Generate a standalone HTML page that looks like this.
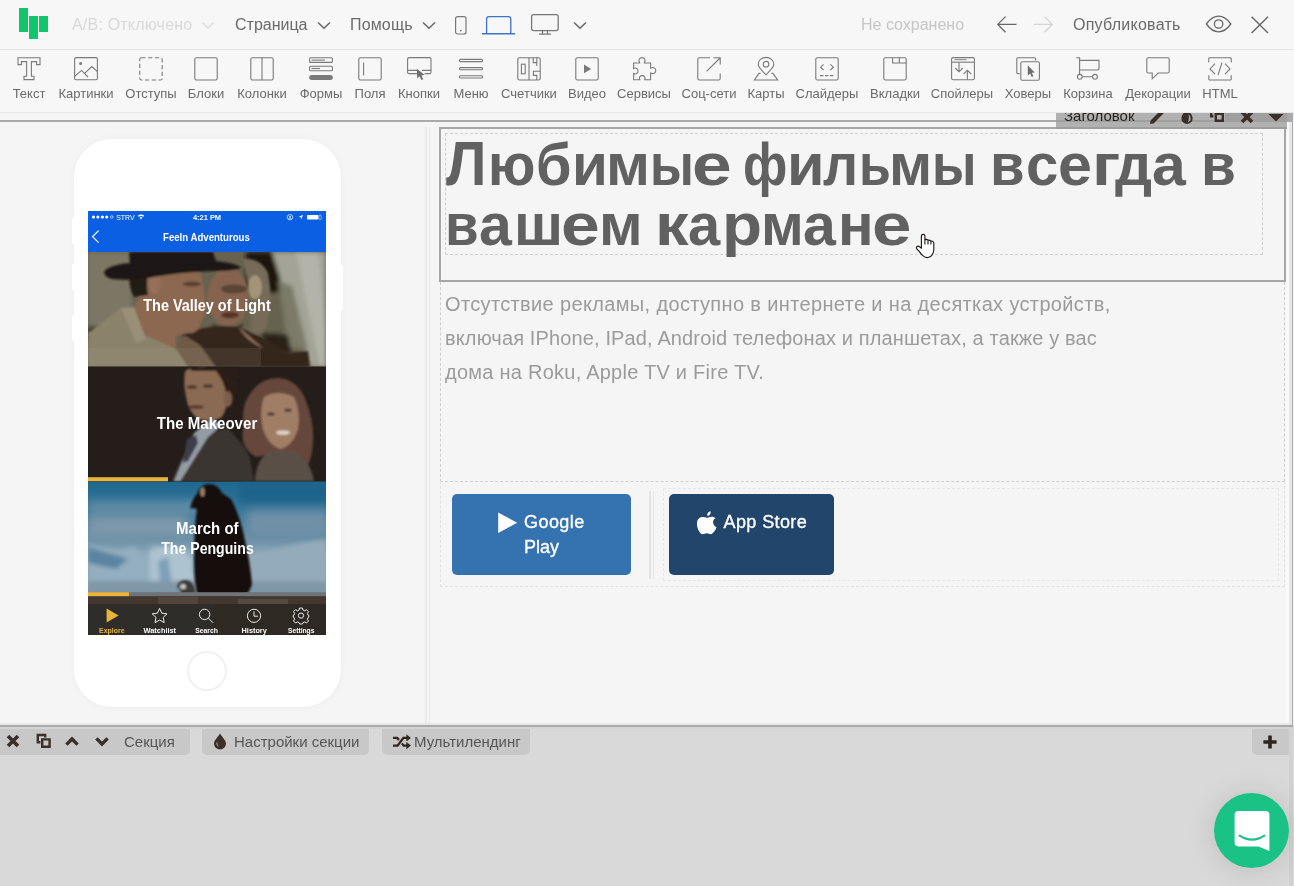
<!DOCTYPE html>
<html><head><meta charset="utf-8">
<style>
*{box-sizing:border-box;margin:0;padding:0}
html,body{width:1294px;height:886px;overflow:hidden;background:#d9d9d9;font-family:"Liberation Sans",sans-serif;}
.abs{position:absolute}
#top{z-index:5;position:absolute;left:0;top:0;width:1294px;height:113px;background:#f7f7f7}
#top .l1{position:absolute;left:0;top:49px;width:1294px;height:1px;background:#e6e6e6}
#top .l2{position:absolute;left:0;top:112px;width:1294px;height:1px;background:#e8e8e8}
.mi{position:absolute;top:15px;font-size:16px;line-height:19px;color:#6a6a6a;white-space:nowrap}
.tool{position:absolute;top:56px;width:80px;margin-left:-40px;text-align:center;font-size:13px;color:#6a6a6a;white-space:nowrap}
.tool svg{display:block;margin:0 auto;width:26px;height:26px}
.tool span{display:block;margin-top:4px;line-height:16px}
#gap{position:absolute;left:0;top:113px;width:1294px;height:7px;background:#f5f5f5}
#sec{position:absolute;left:0;top:120px;width:1293px;height:607px;background:#f5f5f5;border-top:2px solid #aaa;border-bottom:2px solid #aaa;border-right:1px solid #aaa}

.dash{border:1px dashed #cfcfcf}
.hw{position:absolute;font-weight:700;font-size:63px;line-height:60px;color:#616161;white-space:nowrap}
.hw span{display:inline-block;transform-origin:0 0}
.pl{position:absolute;left:445px;font-size:20px;line-height:34px;color:#9b9b9b;white-space:nowrap}

.bt{position:absolute;font-size:18px;line-height:25px;color:#fff;white-space:nowrap;-webkit-text-stroke:0.35px #fff}

.tab{position:absolute;top:729px;height:26px;background:#c8c8c8;border-radius:0 0 5px 5px}
.tl{position:absolute;top:733px;font-size:15px;line-height:18px;color:#555;white-space:nowrap}
</style></head><body><div id="wrap" style="position:absolute;left:0;top:0;width:1294px;height:886px;will-change:transform">
<div id="top">
  <div class="l1"></div><div class="l2"></div>
  <div class="abs" style="left:19px;top:8px;width:9px;height:24px;background:#11c56d"></div>
  <div class="abs" style="left:29px;top:16px;width:9px;height:23px;background:#11c56d"></div>
  <div class="abs" style="left:39px;top:16px;width:9px;height:16px;background:#11c56d"></div>
  <div class="mi" style="left:72px;color:#d9d9d9;letter-spacing:0.2px">A/B: Отключено</div>
  <svg class="abs" style="left:200px;top:19px" width="16" height="12" viewBox="0 0 16 12"><path d="M2.5 3.5 L8 9 L13.5 3.5" fill="none" stroke="#dcdcdc" stroke-width="1.3"/></svg>
  <div class="mi" style="left:235px">Страница</div>
  <svg class="abs" style="left:316px;top:19px" width="16" height="12" viewBox="0 0 16 12"><path d="M2 3.5 L8 9.3 L14 3.5" fill="none" stroke="#666" stroke-width="1.4"/></svg>
  <div class="mi" style="left:350px;letter-spacing:0.15px">Помощь</div>
  <svg class="abs" style="left:421px;top:19px" width="16" height="12" viewBox="0 0 16 12"><path d="M2 3.5 L8 9.3 L14 3.5" fill="none" stroke="#666" stroke-width="1.4"/></svg>
  <svg class="abs" style="left:452px;top:13px" width="18" height="24" viewBox="0 0 18 24"><rect x="3.6" y="3.6" width="10.4" height="17.4" rx="2" fill="none" stroke="#777" stroke-width="1.2"/><circle cx="8.8" cy="17.6" r="0.9" fill="#777"/></svg>
  <svg class="abs" style="left:480px;top:13px" width="38" height="24" viewBox="0 0 38 24"><path d="M6.6 20.6 V6 Q6.6 3.6 9 3.6 H28.4 Q30.8 3.6 30.8 6 V20.6" fill="none" stroke="#3d74c8" stroke-width="1.3"/><path d="M2 20.8 H35" stroke="#3d74c8" stroke-width="1.4"/></svg>
  <svg class="abs" style="left:528px;top:11px" width="34" height="26" viewBox="0 0 34 26"><rect x="3.6" y="3.6" width="26.6" height="16" rx="2" fill="none" stroke="#777" stroke-width="1.3"/><path d="M14.5 19.6 V23 M19.5 19.6 V23 M11 23.2 H23" stroke="#777" stroke-width="1.2" fill="none"/></svg>
  <svg class="abs" style="left:572px;top:19px" width="16" height="12" viewBox="0 0 16 12"><path d="M2 3.5 L8 9.3 L14 3.5" fill="none" stroke="#666" stroke-width="1.4"/></svg>
  <div class="mi" style="left:861px;color:#c6c6c6">Не сохранено</div>
  <svg class="abs" style="left:995px;top:14px" width="24" height="20" viewBox="0 0 24 20"><path d="M21.5 10.4 H3 M10.5 2.6 L2.8 10.4 L10.5 18.2" fill="none" stroke="#666" stroke-width="1.3"/></svg>
  <svg class="abs" style="left:1031px;top:14px" width="24" height="20" viewBox="0 0 24 20"><path d="M2.5 10.4 H21 M13.5 2.6 L21.2 10.4 L13.5 18.2" fill="none" stroke="#d4d4d4" stroke-width="1.3"/></svg>
  <div class="mi" style="left:1073px;letter-spacing:0.25px">Опубликовать</div>
  <svg class="abs" style="left:1204px;top:12px" width="30" height="24" viewBox="0 0 30 24"><path d="M2.4 12 Q8 4.2 14.6 4.2 Q21.2 4.2 26.8 12 Q21.2 19.8 14.6 19.8 Q8 19.8 2.4 12 Z" fill="none" stroke="#666" stroke-width="1.3"/><circle cx="14.6" cy="12" r="4.2" fill="none" stroke="#666" stroke-width="1.3"/></svg>
  <svg class="abs" style="left:1248px;top:13px" width="24" height="24" viewBox="0 0 24 24"><path d="M3.6 3.8 L20 20 M20 3.8 L3.6 20" fill="none" stroke="#666" stroke-width="1.4"/></svg>
  <div class="tool" style="left:29px"><svg viewBox="0 0 26 26"><path d="M2 1.8 H24 V8.6 H20.6 V5.6 H15.4 V20.2 H18 V23.6 H8 V20.2 H10.6 V5.6 H5.4 V8.6 H2 Z" fill="none" stroke="#7a7a7a" stroke-width="1.1"/></svg><span>Текст</span></div>
  <div class="tool" style="left:86px"><svg viewBox="0 0 26 26"><rect x="1.6" y="1.6" width="22.8" height="22.2" rx="1.5" fill="none" stroke="#7a7a7a" stroke-width="1.1"/><circle cx="7.6" cy="7.6" r="1.5" fill="#7a7a7a"/><path d="M1.6 20.4 L8.6 14.4 L15 21 M11.6 17.4 L18.8 10.6 L24.4 15.6" fill="none" stroke="#7a7a7a" stroke-width="1.1"/></svg><span>Картинки</span></div>
  <div class="tool" style="left:151px"><svg viewBox="0 0 26 26"><rect x="1.8" y="1.8" width="22.4" height="22.2" rx="1.5" fill="none" stroke="#7a7a7a" stroke-width="1.1" stroke-dasharray="4.2 2.6"/></svg><span>Отступы</span></div>
  <div class="tool" style="left:206px"><svg viewBox="0 0 26 26"><rect x="1.8" y="1.8" width="22.4" height="22.2" rx="1.5" fill="none" stroke="#7a7a7a" stroke-width="1.1"/></svg><span>Блоки</span></div>
  <div class="tool" style="left:262px"><svg viewBox="0 0 26 26"><rect x="1.8" y="1.8" width="22.4" height="22.2" rx="1.5" fill="none" stroke="#7a7a7a" stroke-width="1.1"/><path d="M13 1.8 V24" fill="none" stroke="#7a7a7a" stroke-width="1.1"/></svg><span>Колонки</span></div>
  <div class="tool" style="left:321px"><svg viewBox="0 0 26 26"><rect x="1.6" y="1.8" width="22.8" height="4.6" rx="1" fill="none" stroke="#7a7a7a" stroke-width="1.1"/><path d="M3.6 4.1 H17" fill="none" stroke="#7a7a7a" stroke-width="1.1"/><rect x="1.6" y="10.2" width="22.8" height="4.6" rx="1" fill="none" stroke="#7a7a7a" stroke-width="1.1"/><path d="M3.6 12.5 H12" fill="none" stroke="#7a7a7a" stroke-width="1.1"/><rect x="1.2" y="19" width="23.6" height="5" rx="2.5" fill="#7a7a7a"/></svg><span>Формы</span></div>
  <div class="tool" style="left:370px"><svg viewBox="0 0 26 26"><rect x="1.8" y="1.8" width="22.4" height="22.2" rx="1.5" fill="none" stroke="#7a7a7a" stroke-width="1.1"/><path d="M6.6 6.4 V19.4" fill="none" stroke="#7a7a7a" stroke-width="1.1"/></svg><span>Поля</span></div>
  <div class="tool" style="left:419px"><svg viewBox="0 0 26 26"><path d="M11.4 17.6 H3 Q1.6 17.6 1.6 16.2 V3 Q1.6 1.6 3 1.6 H23.6 Q25 1.6 25 3 V16.2 Q25 17.6 23.6 17.6 H18.6 M1.6 14.400 H11 M16 14.400 H25" fill="none" stroke="#7a7a7a" stroke-width="1.1"/><path d="M10.9 12.8 L11.2 22.4 L13.6 20.2 L15.4 24 L17.2 23.2 L15.400 19.400 L18.600 19 Z" fill="#6e6e6e"/></svg><span>Кнопки</span></div>
  <div class="tool" style="left:471px"><svg viewBox="0 0 26 26"><rect x="1.4" y="3.4" width="23.2" height="2.2" rx="1.1" fill="none" stroke="#7a7a7a" stroke-width="1.1"/><rect x="1.4" y="11.6" width="23.2" height="2.2" rx="1.1" fill="none" stroke="#7a7a7a" stroke-width="1.1"/><rect x="1.4" y="19.8" width="23.2" height="2.2" rx="1.1" fill="none" stroke="#7a7a7a" stroke-width="1.1"/></svg><span>Меню</span></div>
  <div class="tool" style="left:529px"><svg viewBox="0 0 26 26"><rect x="1.8" y="1.8" width="22.4" height="22.2" rx="1.5" fill="none" stroke="#7a7a7a" stroke-width="1.1"/><path d="M13 1.8 V24" fill="none" stroke="#7a7a7a" stroke-width="1.1"/><rect x="5.4" y="8.2" width="3.8" height="9.6" fill="none" stroke="#7a7a7a" stroke-width="1.1"/><path d="M17.2 1.8 V6.6 H20.8 V1.8 M20.8 6.6 V10 M24.2 15.2 H17.4 V19.4 H20.8 V24" fill="none" stroke="#7a7a7a" stroke-width="1.1"/></svg><span>Счетчики</span></div>
  <div class="tool" style="left:587px"><svg viewBox="0 0 26 26"><rect x="1.8" y="1.8" width="22.4" height="22.2" rx="1.5" fill="none" stroke="#7a7a7a" stroke-width="1.1"/><path d="M10 8.6 L17.2 12.9 L10 17.2 Z" fill="#7a7a7a"/></svg><span>Видео</span></div>
  <div class="tool" style="left:644px"><svg viewBox="0 0 26 26"><path d="M2.6 7 H8.6 C7 3.6 8.8 1.6 11 1.6 C13.2 1.6 15 3.6 13.4 7 H19.6 V12.2 C22.6 10.6 24.8 12.2 24.8 14.6 C24.8 17 22.6 18.6 19.6 17 V23.8 H13.6 C14.8 21.4 13.4 19.6 11.2 19.6 C9 19.6 7.6 21.4 8.8 23.8 H2.6 V17.4 C5 18.8 7 17.2 7 15 C7 12.8 5 11.2 2.6 12.6 Z" fill="none" stroke="#7a7a7a" stroke-width="1.1"/></svg><span>Сервисы</span></div>
  <div class="tool" style="left:709px"><svg viewBox="0 0 26 26"><path d="M14 1.8 H3.2 Q1.8 1.8 1.8 3.2 V22.6 Q1.8 24 3.2 24 H22.8 Q24.2 24 24.2 22.6 V17.6" fill="none" stroke="#7a7a7a" stroke-width="1.1"/><path d="M10.6 15.4 L24 2 M17.4 1.8 H24.2 V8.6" fill="none" stroke="#7a7a7a" stroke-width="1.1"/></svg><span>Соц-сети</span></div>
  <div class="tool" style="left:766px"><svg viewBox="0 0 26 26"><path d="M13 19 C8.6 13.8 5.2 11.6 5.2 8.2 C5.2 4.2 8.8 1.4 13 1.4 C17.2 1.4 20.8 4.2 20.8 8.2 C20.8 11.6 17.4 13.8 13 19 Z" fill="none" stroke="#7a7a7a" stroke-width="1.1"/><circle cx="13" cy="8.2" r="2.8" fill="none" stroke="#7a7a7a" stroke-width="1.1"/><path d="M7.6 17.4 H6 L1.4 24 H24.6 L20 17.4 H18.4" fill="none" stroke="#7a7a7a" stroke-width="1.1"/></svg><span>Карты</span></div>
  <div class="tool" style="left:827px"><svg viewBox="0 0 26 26"><rect x="1.8" y="1.8" width="22.4" height="22.2" rx="1.5" fill="none" stroke="#7a7a7a" stroke-width="1.1"/><path d="M9.6 8.4 L6.6 11.2 L9.6 14 M16.4 8.4 L19.4 11.2 L16.4 14" fill="none" stroke="#7a7a7a" stroke-width="1.1"/><path d="M6 19.6 H20" fill="none" stroke="#7a7a7a" stroke-width="1.1" stroke-dasharray="3.4 1.6"/></svg><span>Слайдеры</span></div>
  <div class="tool" style="left:895px"><svg viewBox="0 0 26 26"><rect x="1.8" y="1.8" width="22.4" height="22.2" rx="1.5" fill="none" stroke="#7a7a7a" stroke-width="1.1"/><path d="M10.6 1.8 V7 H24.2 M17.3 1.8 V7" fill="none" stroke="#7a7a7a" stroke-width="1.1"/></svg><span>Вкладки</span></div>
  <div class="tool" style="left:962px"><svg viewBox="0 0 26 26"><rect x="2.6" y="1.6" width="22.8" height="22.2" rx="1.5" fill="none" stroke="#7a7a7a" stroke-width="1.1"/><path d="M5.4 3.6 H17.5" fill="none" stroke="#9a9a9a" stroke-width="1.3"/><path d="M2.6 6.2 H25.4" fill="none" stroke="#7a7a7a" stroke-width="1.1"/><path d="M10 6.6 V15.6 M6.3 12 L10 15.8 L13.8 12 M18.4 23.6 V14.4 M14.7 18 L18.4 14.2 L22.1 18" fill="none" stroke="#7a7a7a" stroke-width="1.1"/></svg><span>Спойлеры</span></div>
  <div class="tool" style="left:1028px"><svg viewBox="0 0 26 26"><path d="M4.6 17.6 H3 Q1.8 17.6 1.8 16.4 V3 Q1.8 1.8 3 1.8 H19.4 Q20.6 1.8 20.6 3 V4.6" fill="none" stroke="#7a7a7a" stroke-width="1.1"/><rect x="5.8" y="5.8" width="18.6" height="18.4" rx="1.5" fill="none" stroke="#7a7a7a" stroke-width="1.1"/><path d="M12.8 9.4 L12.8 19.4 L15.2 17.4 L16.8 21 L18.4 20.2 L16.8 16.8 L19.8 16.4 Z" fill="#6e6e6e"/></svg><span>Ховеры</span></div>
  <div class="tool" style="left:1088px"><svg viewBox="0 0 26 26"><path d="M1.2 1.8 H4.6 V18.4 M4.6 4.4 H24 V12.6 Q24 14 22.600 14 H4.6 M7.2 20.8 H17.6" fill="none" stroke="#7a7a7a" stroke-width="1.1"/><circle cx="4.8" cy="20.8" r="2.4" fill="none" stroke="#7a7a7a" stroke-width="1.1"/><circle cx="20" cy="20.8" r="2.4" fill="none" stroke="#7a7a7a" stroke-width="1.1"/></svg><span>Корзина</span></div>
  <div class="tool" style="left:1158px"><svg viewBox="0 0 26 26"><path d="M3.2 1.8 H22.8 Q24.2 1.8 24.2 3.2 V15.6 Q24.2 17 22.8 17 H13.2 L7.2 22.8 V17 H3.2 Q1.8 17 1.8 15.6 V3.2 Q1.8 1.8 3.2 1.8 Z" fill="none" stroke="#7a7a7a" stroke-width="1.1"/></svg><span>Декорации</span></div>
  <div class="tool" style="left:1220px"><svg viewBox="0 0 26 26"><path d="M1.8 6.6 V2.4 Q1.8 1.8 2.4 1.8 H23.6 Q24.2 1.8 24.2 2.4 V6.6 M1.8 19.2 V23.4 Q1.8 24 2.4 24 H23.6 Q24.2 24 24.2 23.4 V19.2" fill="none" stroke="#7a7a7a" stroke-width="1.1"/><path d="M8 7.6 L3 12.9 L8 18.2 M18 7.6 L23 12.9 L18 18.2 M15 6.6 L11 19.2" fill="none" stroke="#7a7a7a" stroke-width="1.1"/></svg><span>HTML</span></div>
</div>
<div id="gap"></div><div class="abs" style="left:1293px;top:113px;width:1px;height:612px;background:#f5f5f5"></div>
<div id="sec">
  <div id="inner" style="position:absolute;left:0;top:-122px;width:1294px;height:886px">
<!-- column separators -->
<div class="abs" style="left:425px;top:127px;width:2px;height:596px;background:#e9e9e9"></div>
<div class="abs" style="left:429px;top:127px;width:1px;height:596px;background:#ebebeb"></div>
<div class="abs" style="left:74px;top:139px;width:267px;height:568px;border-radius:38px;background:#fff;box-shadow:0 0 10px rgba(0,0,0,0.035)"></div>
<div class="abs" style="left:72px;top:218px;width:3px;height:26px;background:#fff;border-radius:1px"></div>
<div class="abs" style="left:72px;top:264px;width:3px;height:26px;background:#fff;border-radius:1px"></div>
<div class="abs" style="left:72px;top:315px;width:3px;height:26px;background:#fff;border-radius:1px"></div>
<div class="abs" style="left:340px;top:265px;width:3px;height:45px;background:#fff;border-radius:1px"></div>
<div class="abs" style="left:187px;top:651px;width:40px;height:40px;border-radius:50%;border:2px solid #f1f1f1"></div>
<svg class="abs" style="left:88px;top:211px" width="238" height="424" viewBox="0 0 238 424" font-family="Liberation Sans, sans-serif">
<defs>
<filter id="b2" x="-20%" y="-20%" width="140%" height="140%"><feGaussianBlur stdDeviation="2"/></filter>
<filter id="b4" x="-20%" y="-20%" width="140%" height="140%"><feGaussianBlur stdDeviation="4"/></filter>
<filter id="b1" x="-20%" y="-20%" width="140%" height="140%"><feGaussianBlur stdDeviation="1"/></filter>
<clipPath id="c1"><rect x="0" y="41" width="238" height="114.500"/></clipPath>
<clipPath id="c2"><rect x="0" y="155.500" width="238" height="115"/></clipPath>
<clipPath id="c3"><rect x="0" y="270.500" width="238" height="115"/></clipPath>
<linearGradient id="sky" x1="0" y1="0" x2="0" y2="1"><stop offset="0" stop-color="#1d678e"/><stop offset="0.25" stop-color="#3a7899"/><stop offset="0.5" stop-color="#6a8fa6"/><stop offset="0.62" stop-color="#8aa6b8"/><stop offset="0.9" stop-color="#8ea4b4"/><stop offset="1" stop-color="#6f8797"/></linearGradient>
</defs>
<rect width="238" height="424" fill="#2d2822"/>
<g clip-path="url(#c1)">
<rect x="0" y="41" width="238" height="115" fill="#66624f"/>
<g filter="url(#b2)">
<rect x="0" y="41" width="44" height="74" fill="#7b7765"/>
<rect x="0" y="116" width="30" height="16" fill="#3a3028"/>
<rect x="158" y="41" width="34" height="40" fill="#1c1410"/>
<path d="M184 41 H238 V156 H222 L196 80 Z" fill="#a3a397"/>
<path d="M208 41 L230 41 L238 120 L238 156 L232 156 Z" fill="#b3b3a9"/>
<path d="M190 70 L204 75 L220 140 L200 135 Z" fill="#7c7a68"/>
<path d="M173 122 L200 124 L204 144 L180 140 Z" fill="#2a2018"/>
</g>
<g filter="url(#b1)">
<path d="M154 48 Q172 46 180 62 Q186 90 178 118 Q170 128 162 120 Q166 90 154 48 Z" fill="#766a58"/>
<ellipse cx="167" cy="76" rx="7" ry="12" fill="#a39478"/>
<ellipse cx="140" cy="86" rx="20.500" ry="29" fill="#85634f"/>
<ellipse cx="146" cy="78" rx="13" ry="4.500" fill="#5a4436"/>
<ellipse cx="142" cy="104" rx="9" ry="3.200" fill="#553428"/>
<path d="M124 112 Q140 122 156 112 L152 120 L128 120 Z" fill="#4a3428"/>
<path d="M94 124 Q120 112 150 116 Q180 128 200 142 L220 140 L222 156 L100 156 Z" fill="#34261f"/>
<path d="M150 116 Q158 130 176 138 L160 124 Z" fill="#8a6a55"/>
<path d="M56 64 Q60 58 72 58 L113 62 Q116 76 117 90 L121 97 L116 100 L117 106 L113 110 Q112 120 104 122 Q92 122 88 126 L88 138 L46 128 L44 98 Q52 90 56 64 Z" fill="#8b674f"/>
<path d="M42 62 L60 60 Q58 74 60 84 L46 86 Q40 76 42 62 Z" fill="#241a15"/>
<ellipse cx="67" cy="73" rx="6" ry="10" fill="#96705a"/>
<ellipse cx="104" cy="73" rx="9" ry="2.600" fill="#5a4032"/>
<path d="M0 156 L0 122 L33 97 L44 100 L52 122 L88 138 L128 156 Z" fill="#8b826a"/>
<path d="M33 97 L46 96 L58 128 L48 132 Z" fill="#9a9078"/>
<path d="M88 138 L96 124 L112 134 L128 156 L100 156 Z" fill="#6e5a46"/>
<path d="M16 61 Q20 54 42 52 L41 41 H125 L128 50 Q146 52 153 56 Q150 60 128 60 Q90 61 60 67 Q40 70 24 68 Q16 66 16 61 Z" fill="#1f1713"/>
</g>
<rect x="0" y="137" width="173" height="19" fill="#a9a696" opacity="0.120"/>
</g>
<g clip-path="url(#c2)">
<rect x="0" y="155.500" width="238" height="115" fill="#241d19"/>
<g filter="url(#b1)">
<path d="M190 167 Q210 168 218 190 Q228 215 224 240 Q222 256 214 258 L196 240 L168 246 Q150 235 156 215 Q152 195 164 180 Q174 167 190 167 Z" fill="#66473a"/>
<path d="M167 270 Q168 248 182 240 L206 240 Q222 248 226 270 Z" fill="#5a5046"/>
<path d="M176 186 Q190 178 206 186 Q213 200 210 218 Q204 236 192 238 Q180 234 175 218 Q171 200 176 186 Z" fill="#a07e66"/>
<ellipse cx="195" cy="221.600" rx="7" ry="2.200" fill="#e2d2c8"/>
<ellipse cx="183" cy="203" rx="4" ry="1.600" fill="#4a3226"/><ellipse cx="200" cy="199" rx="4" ry="1.600" fill="#4a3226"/>
<path d="M83 270.500 L103 228 L118 222 L140 217 L156 236 L162 247 L166 270.500 Z" fill="#3a3531"/>
<path d="M106 222 L124 208 L134 214 L120 226 L92 270.500 L86 270.500 Z" fill="#949ba4"/>
<path d="M99 228 L108 224 L110 232 L100 250 L95 252 Z" fill="#3c3e48"/>
<path d="M97 160 Q110 152 130 158 L140 180 Q140 196 134 206 Q124 212 110 208 Q100 200 98 186 Q95 172 97 160 Z" fill="#8a6a52"/>
<path d="M100 156 L150 156 Q152 176 146 192 L140 196 Q142 186 138 182 Q136 170 128 160 L104 160 Z" fill="#2c1f18"/>
<ellipse cx="140" cy="188" rx="4" ry="8" fill="#7d5d48"/>
<ellipse cx="108" cy="196" rx="8" ry="2" fill="#5a3c30"/>
<ellipse cx="104" cy="176" rx="5" ry="1.800" fill="#4a3428"/><ellipse cx="120" cy="175" rx="5" ry="1.800" fill="#4a3428"/>
</g>
<rect x="0" y="266.200" width="80" height="4.400" fill="#e8b43c"/>
</g>
<g clip-path="url(#c3)">
<rect x="0" y="270.500" width="238" height="115" fill="url(#sky)"/>
<g filter="url(#b4)">
<rect x="150" y="270" width="100" height="22" fill="#1a648b"/>
<rect x="0" y="290" width="110" height="14" fill="#5f8ba6"/>
<rect x="0" y="306" width="100" height="20" fill="#7d98aa"/>
<rect x="160" y="300" width="80" height="24" fill="#6f91a8"/>
</g>
<g filter="url(#b2)">
<path d="M0 334 L30 340 L46 336 L58 346 L64 334 L100 338 L108 372 L0 374 Z" fill="#93aec0"/>
<path d="M0 336 L40 348 L28 358 L0 352 Z" fill="#5a84a2"/>
<path d="M160 344 L190 338 L214 332 L238 328 L238 374 L160 374 Z" fill="#94abbb"/>
<path d="M62 340 L80 334 L104 346 L106 378 L62 378 Z" fill="#aec3d0"/>
<path d="M70 350 L80 346 L84 372 L72 372 Z" fill="#7ea0ba"/>
<rect x="0" y="370" width="238" height="12" fill="#8097a7"/>
</g>
<g filter="url(#b1)">
<path d="M109 283 Q112 273 121 273 Q130 273 134 282 L143 288 Q152 305 156 325 Q162 350 164 373 Q162 382 155 386 L110 386 Q106 372 106 350 Q106 318 109 298 Q104 296 102 298 Q104 288 109 283 Z" fill="#15110d"/>
<ellipse cx="114.500" cy="281" rx="2.200" ry="4.500" fill="#b8927a" opacity="0.850"/>
<path d="M89 376 Q90 369 98 369 Q106 370 107 380 L107 386 L94 386 Q94 380 89 376 Z" fill="#3a3a38"/>
<ellipse cx="95" cy="375.500" rx="3" ry="2.600" fill="#c4c4be"/>
</g>
<rect x="0" y="381.200" width="238" height="4.300" fill="#6f7478"/>
<rect x="0" y="381.200" width="41" height="4.300" fill="#e8b43c"/>
</g>
<rect x="0" y="385.500" width="238" height="8" fill="#43372f"/>
<rect x="70" y="386" width="40" height="7" fill="#5a4c44" opacity="0.700"/>
<rect x="150" y="388" width="50" height="5" fill="#5e544c" opacity="0.700"/>
<rect x="0" y="393.500" width="238" height="30.500" fill="#2e2923"/>
<rect x="0" y="393.500" width="125" height="30.500" fill="#2e2d29"/>
<rect x="0" y="0" width="238" height="41" fill="#0a5fe3"/>
<g fill="#fff">
<circle cx="5.500" cy="6" r="1.600"/><circle cx="9.900" cy="6" r="1.600"/><circle cx="14.400" cy="6" r="1.600"/><circle cx="18.700" cy="6" r="1.600"/><circle cx="23.800" cy="6" r="1.300" fill="none" stroke="#fff" stroke-width="0.600"/>
<text x="28.200" y="8.600" font-size="7.200" textLength="18.500" lengthAdjust="spacingAndGlyphs">STRV</text>
<path d="M49.800 4.800 Q53 2.400 56.200 4.800 L55.200 5.800 Q53 4.200 50.800 5.800 Z M51.600 6.600 Q53 5.600 54.400 6.600 L53 8.400 Z"/>
<text x="119" y="8.600" font-size="7.400" font-weight="700" text-anchor="middle" textLength="28.200" lengthAdjust="spacingAndGlyphs">4:21 PM</text>
<circle cx="202" cy="6.200" r="2.700" fill="none" stroke="#fff" stroke-width="0.700"/><circle cx="202" cy="5.800" r="0.900"/><path d="M200.400 7.800 Q202 6.600 203.600 7.800" fill="none" stroke="#fff" stroke-width="0.600"/>
<path d="M215 3.800 L210.600 6 L212.800 6.300 L213.200 8.400 Z"/>
<rect x="219" y="4" width="11.400" height="4.600" rx="0.800"/><rect x="231" y="4" width="2.200" height="4.600" rx="1" fill="none" stroke="#fff" stroke-width="0.500"/>
<path d="M10.600 19.600 L4.600 25.600 L10.600 31.600" fill="none" stroke="#fff" stroke-width="1.300"/>
<text x="118.400" y="29.500" font-size="11" font-weight="700" text-anchor="middle" textLength="86.800" lengthAdjust="spacingAndGlyphs">Feeln Adventurous</text>
<text x="119" y="100" font-size="16.500" font-weight="700" text-anchor="middle" textLength="127.500" lengthAdjust="spacingAndGlyphs">The Valley of Light</text>
<text x="119" y="218.400" font-size="16.500" font-weight="700" text-anchor="middle" textLength="100.500" lengthAdjust="spacingAndGlyphs">The Makeover</text>
<text x="119.300" y="322.700" font-size="16.500" font-weight="700" text-anchor="middle" textLength="62.500" lengthAdjust="spacingAndGlyphs">March of</text>
<text x="119.500" y="342.800" font-size="16.500" font-weight="700" text-anchor="middle" textLength="92.500" lengthAdjust="spacingAndGlyphs">The Penguins</text>
</g>
<path d="M18.600 397.600 L30.600 404.600 L18.600 411.600 Z" fill="#e8b43c"/>
<text x="23.800" y="421.600" font-size="7.800" font-weight="700" text-anchor="middle" fill="#e8b43c" textLength="25.500" lengthAdjust="spacingAndGlyphs">Explore</text>
<g fill="none" stroke="#fff" stroke-width="0.900">
<path d="M71.600 397.400 L73.800 402.200 L79 402.800 L75.200 406.400 L76.200 411.600 L71.600 409 L67 411.600 L68 406.400 L64.200 402.800 L69.400 402.200 Z"/>
<circle cx="116.600" cy="403.400" r="5.200"/><path d="M120.400 407.200 L125 411.800"/>
<circle cx="166" cy="404.800" r="6.600"/><path d="M166 400.400 V405.200 H170"/>
<circle cx="213" cy="404.600" r="2.600"/>
<path d="M211.600 397 H214.400 L214.900 399 L216.700 399.800 L218.500 398.700 L220.500 400.700 L219.400 402.500 L220.200 404.300 L220.800 404.400 V406.200 L220.200 406.400 L219.400 408.200 L220.500 410 L218.500 412 L216.700 410.900 L214.900 411.700 L214.400 413 H211.600 L211.100 411.700 L209.300 410.900 L207.500 412 L205.500 410 L206.600 408.200 L205.800 406.400 L205.200 406.200 V404.400 L205.800 404.300 L206.600 402.500 L205.500 400.700 L207.500 398.700 L209.300 399.800 L211.100 399 Z"/>
</g>
<g fill="#fff" font-size="7.800" font-weight="700" text-anchor="middle">
<text x="71.800" y="421.600" textLength="32.500" lengthAdjust="spacingAndGlyphs">Watchlist</text>
<text x="118.600" y="421.600" textLength="22.700" lengthAdjust="spacingAndGlyphs">Search</text>
<text x="166.200" y="421.600" textLength="25.200" lengthAdjust="spacingAndGlyphs">History</text>
<text x="213.200" y="421.600" textLength="26.600" lengthAdjust="spacingAndGlyphs">Settings</text>
</g>
</svg>
<!-- heading widget -->
<div class="abs" style="left:439px;top:127px;width:847px;height:155px;border:2px solid #a6a6a6"></div>
<div class="abs dash" style="left:445px;top:133px;width:818px;height:122px"></div>
<div class="hw" style="left:445.9px;top:133px"><span style="transform:scaleX(0.9150)">Л</span></div>
<div class="hw" style="left:487.5px;top:133px"><span style="transform:scale(0.8809,0.942);transform-origin:0 52px">ю</span></div>
<div class="hw" style="left:536.2px;top:133px"><span style="transform:scale(0.9121,0.942);transform-origin:0 52px">б</span></div>
<div class="hw" style="left:571.5px;top:133px"><span style="transform:scale(0.9267,0.942);transform-origin:0 52px">и</span></div>
<div class="hw" style="left:606.2px;top:133px"><span style="transform:scale(0.9447,0.942);transform-origin:0 52px">м</span></div>
<div class="hw" style="left:650.0px;top:133px"><span style="transform:scale(0.8156,0.942);transform-origin:0 52px">ы</span></div>
<div class="hw" style="left:691.6px;top:133px"><span style="transform:scale(1.1333,0.942);transform-origin:0 52px">е</span></div>
<div class="hw" style="left:742.9px;top:133px"><span style="transform:scale(0.8040,0.942);transform-origin:0 52px">ф</span></div>
<div class="hw" style="left:786.9px;top:133px"><span style="transform:scale(0.9700,0.942);transform-origin:0 52px">и</span></div>
<div class="hw" style="left:823.1px;top:133px"><span style="transform:scale(0.8771,0.942);transform-origin:0 52px">л</span></div>
<div class="hw" style="left:858.6px;top:133px"><span style="transform:scale(0.8219,0.942);transform-origin:0 52px">ь</span></div>
<div class="hw" style="left:889.1px;top:133px"><span style="transform:scale(0.9263,0.942);transform-origin:0 52px">м</span></div>
<div class="hw" style="left:932.0px;top:133px"><span style="transform:scale(0.8267,0.942);transform-origin:0 52px">ы</span></div>
<div class="hw" style="left:989.8px;top:133px"><span style="transform:scale(0.8938,0.942);transform-origin:0 52px">в</span></div>
<div class="hw" style="left:1026.2px;top:133px"><span style="transform:scale(0.9226,0.942);transform-origin:0 52px">с</span></div>
<div class="hw" style="left:1058.0px;top:133px"><span style="transform:scale(0.9700,0.942);transform-origin:0 52px">е</span></div>
<div class="hw" style="left:1092.3px;top:133px"><span style="transform:scale(1.0810,0.942);transform-origin:0 52px">г</span></div>
<div class="hw" style="left:1114.6px;top:133px"><span style="transform:scale(0.9256,0.942);transform-origin:0 52px">д</span></div>
<div class="hw" style="left:1151.6px;top:133px"><span style="transform:scale(0.9636,0.942);transform-origin:0 52px">а</span></div>
<div class="hw" style="left:1200.6px;top:133px"><span style="transform:scale(0.9000,0.942);transform-origin:0 52px">в</span></div>
<div class="hw" style="left:445.3px;top:193px"><span style="transform:scale(0.8688,0.942);transform-origin:0 52px">в</span></div>
<div class="hw" style="left:478.6px;top:193px"><span style="transform:scale(0.9364,0.942);transform-origin:0 52px">а</span></div>
<div class="hw" style="left:513.7px;top:193px"><span style="transform:scale(0.9341,0.942);transform-origin:0 52px">ш</span></div>
<div class="hw" style="left:560.8px;top:193px"><span style="transform:scale(1.1067,0.942);transform-origin:0 52px">е</span></div>
<div class="hw" style="left:598.7px;top:193px"><span style="transform:scale(0.9368,0.942);transform-origin:0 52px">м</span></div>
<div class="hw" style="left:654.5px;top:193px"><span style="transform:scale(1.0667,0.942);transform-origin:0 52px">к</span></div>
<div class="hw" style="left:687.8px;top:193px"><span style="transform:scale(0.9182,0.942);transform-origin:0 52px">а</span></div>
<div class="hw" style="left:722.0px;top:193px"><span style="transform:scale(1.0406,0.942);transform-origin:0 52px">р</span></div>
<div class="hw" style="left:760.6px;top:193px"><span style="transform:scale(0.9184,0.942);transform-origin:0 52px">м</span></div>
<div class="hw" style="left:802.5px;top:193px"><span style="transform:scale(0.9364,0.942);transform-origin:0 52px">а</span></div>
<div class="hw" style="left:838.3px;top:193px"><span style="transform:scale(0.9367,0.942);transform-origin:0 52px">н</span></div>
<div class="hw" style="left:871.5px;top:193px"><span style="transform:scale(1.1267,0.942);transform-origin:0 52px">е</span></div>
<!-- paragraph -->
<div class="abs dash" style="left:440px;top:282px;width:845px;height:200px;border-top:none"></div>
<div class="pl" style="top:287px;letter-spacing:0.355px">Отсутствие рекламы, доступно в интернете и на десятках устройств,</div>
<div class="pl" style="top:321px;letter-spacing:0.135px">включая IPhone, IPad, Android телефонах и планшетах, а также у вас</div>
<div class="pl" style="top:355px;letter-spacing:0.25px">дома на Roku, Apple TV и Fire TV.</div>
<div class="abs dash" style="left:440px;top:481px;width:845px;height:106px;border-color:#e2e2e2;border-top:none"></div>
<div class="abs dash" style="left:663px;top:488px;width:616px;height:93px;border-color:#e6e6e6"></div>
<div class="abs" style="left:649px;top:491px;width:2px;height:88px;background:#e4e4e4"></div>
<div class="abs" style="left:653px;top:491px;width:1px;height:88px;background:#e6e6e6"></div>
<div class="abs" style="left:452px;top:494px;width:179px;height:81px;border-radius:5px;background:#3572b0"></div>
<svg class="abs" style="left:497px;top:511px" width="22" height="24" viewBox="0 0 22 24"><path d="M1.2 1.6 L20.2 11.8 L1.2 22 Z" fill="#fff"/></svg>
<div class="bt" style="left:524px;top:510px;letter-spacing:0.45px">Google</div>
<div class="bt" style="left:524px;top:535px;letter-spacing:0px">Play</div>
<div class="abs" style="left:669px;top:494px;width:165px;height:81px;border-radius:5px;background:#21456b"></div>
<svg class="abs" style="left:694.5px;top:508.6px" width="25.6" height="27.7" viewBox="0 0 24 26"><path d="M14.6 2 C12.6 2.4 11.2 4.2 11.4 6.4 C13.6 6.4 15 4.4 14.6 2 Z M6.8 7.6 C3.8 7.6 1.8 10.4 1.8 13.8 C1.8 17.8 4.4 23.6 7.2 23.6 C8.6 23.6 9.4 22.8 11 22.8 C12.6 22.8 13.2 23.6 14.8 23.6 C17 23.6 19.4 19.6 20.2 17.2 C17.8 16.2 16.8 13.8 17 12 C17.2 10.4 18.2 9.4 19.4 8.8 C18.4 7.6 16.8 7.2 15.4 7.2 C13.6 7.2 12.4 8.2 11.2 8.2 C10 8.2 8.6 7.6 6.8 7.6 Z" fill="#fff"/></svg>
<div class="bt" style="left:723.5px;top:510px;letter-spacing:0.4px">App Store</div>
<div class="abs" style="left:1286px;top:123px;width:3px;height:602px;background:#fafafa"></div><div class="abs" style="left:1289px;top:123px;width:3px;height:602px;background:#e8e8e8"></div>
<div class="abs" style="left:1056px;top:113px;width:231px;height:16px;background:#b1b1b1;overflow:hidden">
  <div class="abs" style="left:169px;top:0;width:62px;height:9px;background:#9f9f9f"></div>
  <div class="abs" style="left:0;top:7px;width:231px;height:2px;background:#9f9f9f"></div>
  <div class="abs" style="left:0;top:14px;width:231px;height:2px;background:#9d9d9d"></div>
  <div class="abs" style="left:8px;top:-6px;font-size:15px;line-height:18px;color:#262220;white-space:nowrap">Заголовок</div>
  <svg class="abs" style="left:92px;top:-5px" width="18" height="18" viewBox="0 0 18 18"><path d="M2 16 L2.6 12.4 L12.4 2.6 Q13.4 1.6 14.6 2.8 L15.2 3.4 Q16.4 4.6 15.4 5.6 L5.6 15.4 Z" fill="#3a2e28"/></svg>
  <svg class="abs" style="left:123px;top:-6px" width="16" height="18" viewBox="0 0 16 18"><path d="M8 1 C11 5.6 13.6 8.4 13.6 11.4 A5.6 5.6 0 0 1 2.4 11.4 C2.4 8.4 5 5.6 8 1 Z" fill="#3a2e28"/><path d="M9.4 7 C11.2 9 11.8 10.4 11.6 12 C11.4 13.8 10.2 14.8 8.8 15 C10 13 10.4 10 9.4 7 Z" fill="#b1b1b1"/></svg>
  <svg class="abs" style="left:152px;top:-7px" width="18" height="18" viewBox="0 0 18 18"><path d="M2 2 H11.400 V5.400 H9 V4.400 H4.400 V9 H5.400 V11.400 H2 Z" fill="#3a2e28"/><path d="M6.600 6.600 H16 V16 H6.600 Z M9 9 V13.600 H13.600 V9 Z" fill="#3a2e28" fill-rule="evenodd"/></svg>
  <svg class="abs" style="left:183px;top:-4px" width="16" height="16" viewBox="0 0 16 16"><path d="M3 3 L13 13 M13 3 L3 13" fill="none" stroke="#3a2e28" stroke-width="3.600"/></svg>
  <svg class="abs" style="left:211px;top:0px" width="18" height="10" viewBox="0 0 18 10"><path d="M1.5 1 H16.5 L9 8.4 Z" fill="#3a2e28"/></svg>
</div>
<div class="abs" style="left:1287px;top:113px;width:6px;height:9px;background:#a9a9a9"></div>
<!-- hand cursor -->
<svg class="abs" style="left:914px;top:232px" width="24" height="28" viewBox="0 0 24 28"><path d="M7.400 16.200 V3.900 Q7.400 2.300 9.150 2.300 Q10.900 2.300 10.900 3.900 V7.600 Q12.800 6.900 14 8.200 Q15.600 7.700 16.900 9.200 Q19.800 8.900 19.800 11.600 V17.600 Q19.800 22 16.400 24.600 Q13 26.600 9.800 24.400 Q7.400 22.600 5.400 19.600 L2.600 16.600 Q2 15.200 3.200 14.400 Q4.400 13.800 5.600 14.800 Z" fill="#fff" stroke="#1c1815" stroke-width="1.150" stroke-linejoin="round"/><path d="M10.900 7.600 V12.400 M14 8.400 V12.400 M16.900 9.400 V12.600" stroke="#1c1815" stroke-width="1.100" fill="none"/></svg>
</div>
</div>
<div class="abs" style="left:0;top:723px;width:1292px;height:2px;background:#e7e7e7"></div>
<div class="abs" style="left:0;top:727px;width:1293px;height:2px;background:#d4d4d4"></div>
<div class="abs" style="left:1289px;top:728px;width:4px;height:158px;background:#d1d1d1"></div>
<div class="tab" style="left:0;width:190px;border-bottom-left-radius:0"></div>
<div class="tab" style="left:202px;width:167px"></div>
<div class="tab" style="left:382px;width:148px"></div>
<div class="tab" style="left:1252px;width:37px;border-bottom-right-radius:0"></div>
<svg class="abs" style="left:5px;top:733px" width="16" height="16" viewBox="0 0 16 16"><path d="M3 3 L13 13 M13 3 L3 13" fill="none" stroke="#3a2f29" stroke-width="3.600"/></svg>
<svg class="abs" style="left:35px;top:732px" width="18" height="18" viewBox="0 0 18 18"><path d="M1.600 1.800 H11.400 V5.400 H9 V4.200 H4 V9 H5.400 V11.400 H1.600 Z" fill="#3a2f29"/><path d="M6 6.200 H15.800 V16 H6 Z M8.400 8.600 V13.600 H13.400 V8.600 Z" fill="#3a2f29" fill-rule="evenodd"/></svg>
<svg class="abs" style="left:64px;top:735px" width="16" height="12" viewBox="0 0 16 12"><path d="M2.400 9.600 L8 4 L13.600 9.600" fill="none" stroke="#3a2f29" stroke-width="3.400"/></svg>
<svg class="abs" style="left:94px;top:736px" width="16" height="12" viewBox="0 0 16 12"><path d="M2.400 2.400 L8 8 L13.600 2.400" fill="none" stroke="#3a2f29" stroke-width="3.400"/></svg>
<div class="tl" style="left:124px">Секция</div>
<svg class="abs" style="left:212px;top:732px" width="16" height="18" viewBox="0 0 16 18"><path d="M8 1.4 C11 6 14 8.6 14 11.6 A6 6 0 0 1 2 11.6 C2 8.600 5 6 8 1.4 Z" fill="#3a2f29"/><path d="M4.6 10.4 C4.2 12.6 5.2 14 7 14.4 C5.600 13.400 5.2 12 5.400 10.400 Z" fill="#c8c8c8"/></svg>
<div class="tl" style="left:234px">Настройки секции</div>
<svg class="abs" style="left:392px;top:733px" width="20" height="17" viewBox="0 0 20 17"><path d="M1 12.600 H5.600 L11.400 4.900 H15 M1 4.900 H5.200 L7 7 M9.900 10.400 L11.600 12.600 H15" fill="none" stroke="#30261f" stroke-width="2.300"/><path d="M14.400 1.200 L18.900 4.900 L14.400 8.500 Z M14.400 9 L18.900 12.600 L14.400 16.200 Z" fill="#30261f"/></svg>
<div class="tl" style="left:414px">Мультилендинг</div>
<svg class="abs" style="left:1262px;top:734px" width="16" height="16" viewBox="0 0 16 16"><path d="M6.200 1.400 H9.800 V6.200 H14.600 V9.800 H9.800 V14.600 H6.200 V9.800 H1.400 V6.200 H6.200 Z" fill="#2e2420"/></svg>
<!-- chat bubble -->
<div class="abs" style="left:1214px;top:793px;width:75px;height:75px;border-radius:50%;background:#1bc286;box-shadow:0 2px 30px rgba(0,0,0,0.13)"></div>
<svg class="abs" style="left:1230px;top:808px" width="44" height="46" viewBox="0 0 44 46"><path d="M8.400 3 H35.600 Q39.400 3 39.400 6.800 V43 L28.600 38.400 H8.400 Q4.600 38.400 4.600 34.600 V6.800 Q4.600 3 8.400 3 Z" fill="#fff"/><path d="M9.600 27.600 Q22 35.600 34.400 27.600" fill="none" stroke="#1bc286" stroke-width="2.200" stroke-linecap="round"/></svg>
</div></body></html>
